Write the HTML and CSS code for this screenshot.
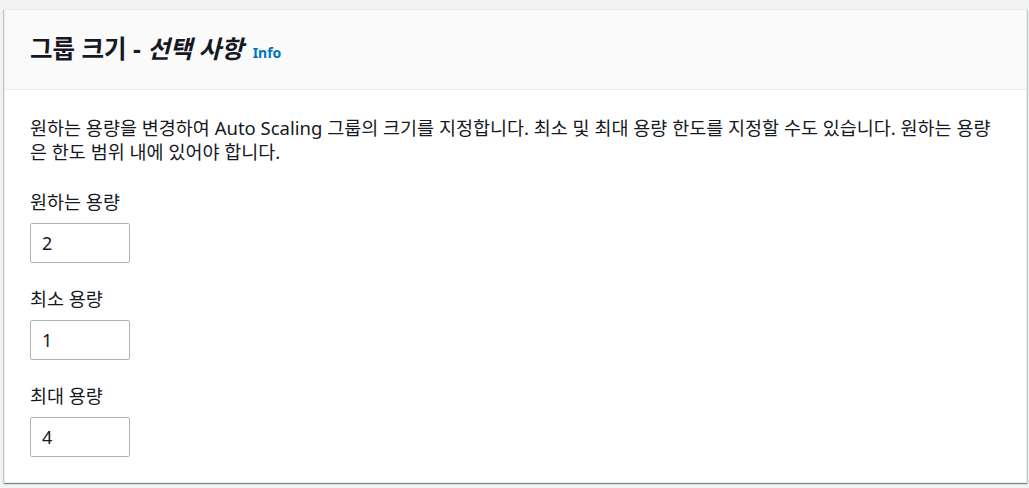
FILE: index.html
```html
<!DOCTYPE html>
<html lang="ko">
<head>
<meta charset="utf-8">
<link rel="stylesheet" href="styles.css">
</head>
<body>
<div class="card">
  <div class="card-header">
    <h2 class="title">그룹 크기 - <em>선택 사항</em></h2>
    <a class="info" href="#">Info</a>
  </div>
  <div class="card-body">
    <p class="desc">원하는 용량을 변경하여 Auto Scaling 그룹의 크기를 지정합니다. 최소 및 최대 용량 한도를 지정할 수도 있습니다. 원하는 용량은 한도 범위 내에 있어야 합니다.</p>
    <div class="field">
      <label class="label">원하는 용량</label>
      <input class="input" type="text" value="2">
    </div>
    <div class="field">
      <label class="label">최소 용량</label>
      <input class="input" type="text" value="1">
    </div>
    <div class="field">
      <label class="label">최대 용량</label>
      <input class="input" type="text" value="4">
    </div>
  </div>
</div>
</body>
</html>
```

FILE: styles.css
```css
html, body {
  margin: 0;
  padding: 0;
  background: #f2f3f3;
}
body {
  padding: 9px 2px 5px 4px;
  font-family: "Noto Sans", "Noto Sans CJK KR", sans-serif;
  color: #16191f;
}
.card {
  background: #fff;
  border: 1px solid #eaeded;
  box-shadow: 0 1px 1px 0 rgba(0, 28, 36, 0.3), 1px 1px 1px 0 rgba(0, 28, 36, 0.15), -1px 1px 1px 0 rgba(0, 28, 36, 0.15);
  height: 474px;
  box-sizing: border-box;
}
.card-header {
  background: #fafafa;
  border-bottom: 1px solid #eaeded;
  height: 80px;
  box-sizing: border-box;
  display: flex;
  align-items: baseline;
  padding: 23px 25px 0;
  gap: 9px;
}
.title {
  margin: 0;
  font-size: 24.5px;
  font-weight: 700;
  line-height: 32px;
}
.title em {
  font-style: italic;
}
.info {
  color: #0073bb;
  font-size: 14px;
  font-weight: 700;
  text-decoration: none;
}
.card-body {
  padding: 26px 25px 0;
}
.desc {
  margin: 0;
  font-size: 18.5px;
  line-height: 24px;
}
.field {
  display: flex;
  flex-direction: column;
  align-items: flex-start;
  margin-top: 26px;
}
.field + .field {
  margin-top: 24px;
}
.label {
  font-size: 18.5px;
  line-height: 24px;
  margin-bottom: 9px;
}
.input {
  width: 100px;
  height: 40px;
  box-sizing: border-box;
  border: 1px solid #aab7b8;
  border-radius: 2px;
  padding: 0 11px;
  font-family: inherit;
  font-size: 18px;
  color: #16191f;
  background: #fff;
  margin: 0;
}
```
